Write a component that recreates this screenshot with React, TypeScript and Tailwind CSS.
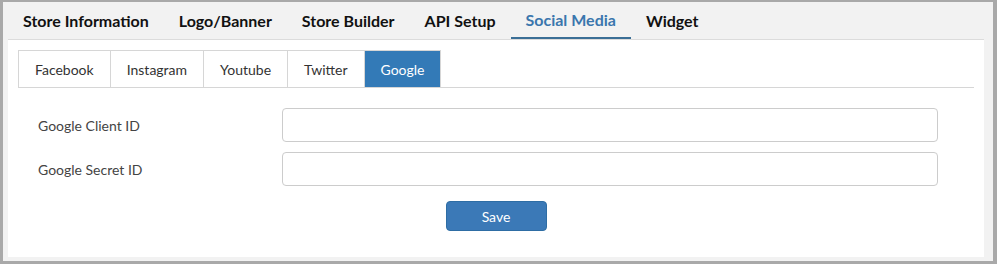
import { useState } from "react";

const mainTabs = ["Store Information", "Logo/Banner", "Store Builder", "API Setup", "Social Media", "Widget"];
const socialTabs = ["Facebook", "Instagram", "Youtube", "Twitter", "Google"];

export default function App() {
  const [mainTab, setMainTab] = useState("Social Media");
  const [socialTab, setSocialTab] = useState("Google");

  return (
    <div
      className="w-[997px] h-[264px] bg-[#f2f2f2] border-[#a9a9a9] border-t-2 border-l-[3px] border-r-4 border-b-[3px] pl-[5px] pr-[9px] pb-[4px] flex flex-col text-[#333]"
      style={{ fontFamily: "Lato, 'Open Sans', sans-serif" }}
    >
      {/* Main tabs */}
      <div className="flex h-[37px] shrink-0">
        {mainTabs.map((tab) => (
          <button
            key={tab}
            onClick={() => setMainTab(tab)}
            className={`h-[37px] px-[15px] text-[16px] font-bold ${
              mainTab === tab ? "text-[#3a76ad] border-b-2 border-[#3b6f96]" : "text-[#111]"
            }`}
          >
            {tab}
          </button>
        ))}
      </div>

      {/* Panel */}
      <div className="flex-1 bg-white border-t border-[#dcdcdc] px-[10px] pt-[10px]">
        <div className="flex border-b border-[#d6d6d6]">
          {socialTabs.map((tab) => (
            <button
              key={tab}
              onClick={() => setSocialTab(tab)}
              className={`h-[37px] px-4 text-[14px] border-t border-l border-[#d6d6d6] last:border-r ${
                socialTab === tab ? "bg-[#337ab7] text-white border-[#337ab7]" : "text-[#333]"
              }`}
            >
              {tab}
            </button>
          ))}
        </div>

        <div className="ml-[20px] mr-[36px] mt-[20px] flex flex-col gap-[10px]">
          <div className="flex items-center">
            <label className="w-[244px] text-[14px] text-[#444] pt-px">Google Client ID</label>
            <input className="flex-1 h-[34px] border border-[#ccc] rounded-[4px] px-3 text-[14px] outline-none" />
          </div>
          <div className="flex items-center">
            <label className="w-[244px] text-[14px] text-[#444] pt-px">Google Secret ID</label>
            <input className="flex-1 h-[34px] border border-[#ccc] rounded-[4px] px-3 text-[14px] outline-none" />
          </div>
        </div>

        <div className="flex justify-center mt-[15px]">
          <button className="w-[101px] h-[30px] bg-[#3b79b7] border border-[#2e6da4] rounded-[4px] text-white text-[14px]">
            Save
          </button>
        </div>
      </div>
    </div>
  );
}
